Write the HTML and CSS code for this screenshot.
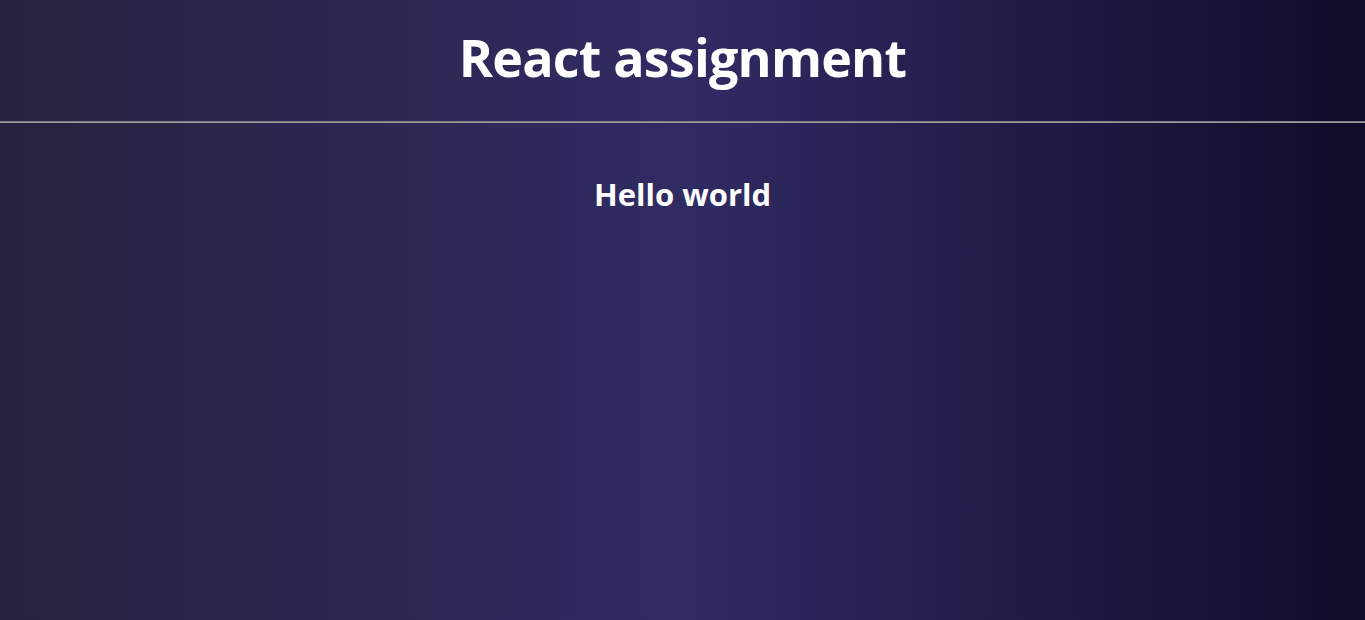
FILE: index.html
```html
<!DOCTYPE html>
<html lang="en">
<head>
<meta charset="utf-8">
<title>React assignment</title>
<link rel="stylesheet" href="styles.css">
</head>
<body>
<div class="app">
  <header class="app-header">
    <h1 class="app-title">React assignment</h1>
  </header>
  <hr class="divider">
  <main class="content">
    <h2 class="greeting">Hello world</h2>
  </main>
</div>
</body>
</html>
```
FILE: styles.css
```css
html, body {
  margin: 0;
  padding: 0;
  height: 100%;
}
body {
  background: linear-gradient(to right, #24243e, #302b63, #0f0c29);
  color: #ffffff;
  font-family: "Open Sans", "Noto Sans", "DejaVu Sans", sans-serif;
}
.app {
  min-height: 100vh;
  display: flex;
  flex-direction: column;
}
.app-header {
  display: flex;
  justify-content: center;
  padding-top: 25px;
  height: 121px;
  box-sizing: border-box;
}
.app-title {
  margin: 0;
  font-size: 52px;
  line-height: 64px;
  font-weight: 700;
  letter-spacing: -0.8px;
}
.divider {
  margin: 0;
  height: 0;
  border: 0;
  border-top: 1px solid #7f7f86;
  border-bottom: 1px solid #9a9a9a;
}
.content {
  display: flex;
  justify-content: center;
  padding-top: 50px;
}
.greeting {
  margin: 0;
  font-size: 31px;
  line-height: 42px;
  font-weight: 700;
}
```
